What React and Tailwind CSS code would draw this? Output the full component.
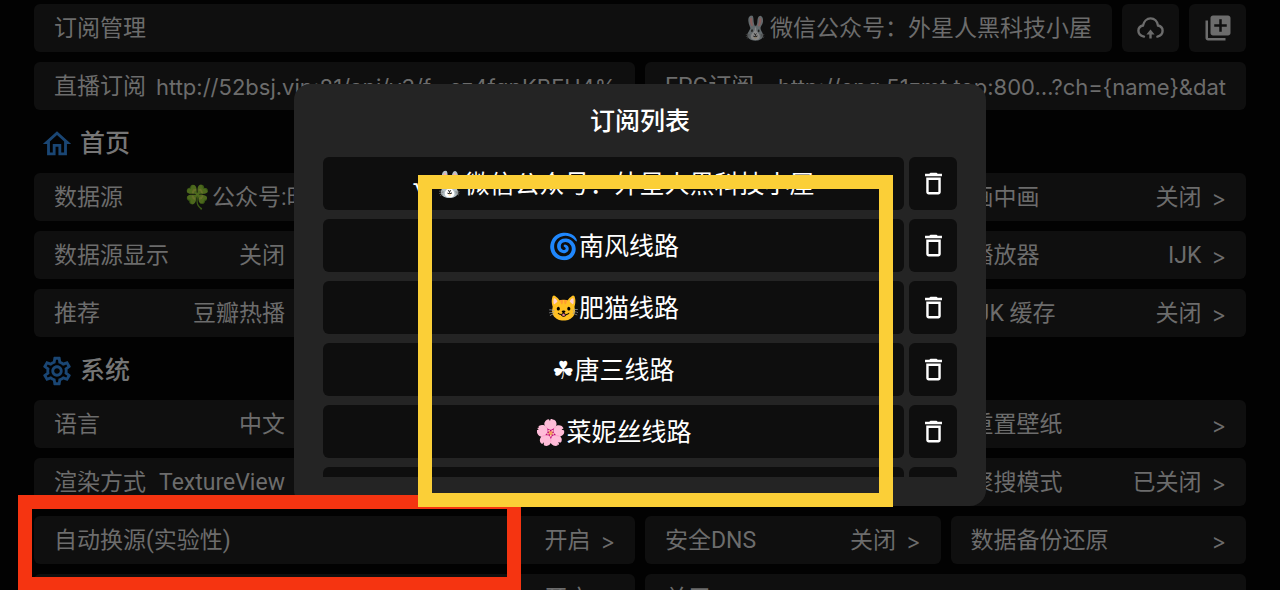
import { MdLibraryAdd, MdDeleteOutline, MdOutlineHome, MdOutlineSettings } from 'react-icons/md';

const homeSettings = [
  { label: '数据源', emoji: '🍀', value: '公众号:时', plain: true },
  {},
  {},
  { label: '画中画', value: '关闭' },
  { label: '数据源显示', value: '关闭' },
  {},
  {},
  { label: '播放器', value: 'IJK' },
  { label: '推荐', value: '豆瓣热播' },
  {},
  {},
  { label: 'IJK 缓存', value: '关闭' },
];

const systemSettings = [
  { label: '语言', value: '中文' },
  {},
  {},
  { label: '重置壁纸' },
  { label: '渲染方式', value: 'TextureView' },
  {},
  {},
  { label: '聚搜模式', value: '已关闭' },
  { label: '自动换源(实验性)', value: '开启', wide: true },
  { label: '安全DNS', value: '关闭' },
  { label: '数据备份还原' },
  { value: '开启', wide: true },
  { label: '关于', wide: true },
];

const subscriptions = [
  '√ 🐰微信公众号：外星人黑科技小屋',
  '🌀南风线路',
  '😺肥猫线路',
  '☘唐三线路',
  '🌸菜妮丝线路',
  '',
];

function CloudUploadIcon() {
  return (
    <svg viewBox="0 0 27 22" className="h-[22px] w-[27px]" fill="none" stroke="currentColor" strokeWidth="2.4" strokeLinecap="round">
      <path d="M7 19.6C3.4 18.8 1.4 16.4 1.4 13.8C1.4 11 3.4 9 6 8.5C6.8 4.6 9.8 1.4 13.6 1.4C17.4 1.4 20.3 4.4 21 8.5C23.6 9 25.6 11 25.6 13.8C25.6 16.4 23.6 18.8 20.4 19.6" />
      <path d="M13.5 21.5V16" strokeLinecap="butt" />
      <path d="M9.4 17.5L13.5 12.6L17.6 17.5Z" fill="currentColor" stroke="none" />
    </svg>
  );
}

function SettingCell({ label, emoji, value, wide, plain }) {
  return (
    <button
      type="button"
      className={`flex h-12 items-center justify-between whitespace-nowrap rounded-md bg-[#0f0f0f] px-5 pt-0.5 ${wide ? 'col-span-2' : ''}`}
    >
      <span>{label}</span>
      {(label || value) && (
        <span className="flex items-center gap-2.5">
          <span>
            {emoji && <span className="opacity-50">{emoji}</span>}
            {value}
          </span>
          {!plain && <span className="font-['Inter'] text-[22px]">&gt;</span>}
        </span>
      )}
    </button>
  );
}

function UrlCell({ label, url }) {
  return (
    <button
      type="button"
      className="flex h-12 items-center justify-between gap-2.5 overflow-hidden whitespace-nowrap rounded-md bg-[#0f0f0f] px-5 pt-0.5"
    >
      <span>{label}</span>
      <span className="font-['Inter'] text-[22px]">{url}</span>
    </button>
  );
}

function Section({ icon: Icon, title, items }) {
  return (
    <section className="flex flex-col gap-2.5">
      <h2 className="flex h-[43px] items-center gap-1.5 pt-1 pl-1.5 text-[25px] font-medium text-[#767676]">
        <Icon className="size-[34px] text-[#1a4674]" />
        {title}
      </h2>
      <div className="grid grid-cols-4 gap-2.5">
        {items.map((item, i) => (
          <SettingCell key={i} {...item} />
        ))}
      </div>
    </section>
  );
}

function SubscriptionDialog() {
  return (
    <div
      role="dialog"
      aria-labelledby="dialog-title"
      className="w-full max-w-[692px] rounded-2xl bg-[#242424] px-[29px] pb-[29px] text-[25px] text-white"
    >
      <h1 id="dialog-title" className="flex h-[73px] items-center justify-center pt-0.5 font-medium">
        订阅列表
      </h1>
      <ul className="flex h-80 flex-col gap-[9px] overflow-hidden">
        {subscriptions.map((name, i) => (
          <li key={i} className="flex shrink-0 gap-[5px]">
            <button type="button" className="h-[53px] flex-1 whitespace-nowrap rounded-md bg-[#0e0e0e] pt-0.5">
              {name}
            </button>
            <button
              type="button"
              aria-label="删除"
              className="flex h-[53px] w-12 items-center justify-center rounded-md bg-[#0e0e0e]"
            >
              <MdDeleteOutline className="size-[29px]" />
            </button>
          </li>
        ))}
      </ul>
    </div>
  );
}

export default function App() {
  return (
    <div className="relative h-screen overflow-hidden bg-[#020202] font-[Roboto,'Noto_Sans_CJK_SC',sans-serif] text-[23px] text-[#6c6c6c]">
      <main className="flex flex-col gap-2.5 px-[34px] pt-1">
        <div className="flex gap-2.5">
          <button type="button" className="flex h-12 flex-1 items-center justify-between rounded-md bg-[#0f0f0f] px-5 pt-0.5">
            <span>订阅管理</span>
            <span>
              <span className="opacity-50">🐰</span>微信公众号：外星人黑科技小屋
            </span>
          </button>
          <button type="button" aria-label="上传" className="flex h-12 w-[57px] items-center justify-center rounded-md bg-[#0f0f0f]">
            <CloudUploadIcon />
          </button>
          <button type="button" aria-label="添加" className="flex h-12 w-[57px] items-center justify-center rounded-md bg-[#0f0f0f]">
            <MdLibraryAdd className="size-[30px]" />
          </button>
        </div>

        <div className="grid grid-cols-2 gap-2.5">
          <UrlCell label="直播订阅" url="http://52bsj.vip:81/api/v3/f…cz4fqpKBFU4%" />
          <UrlCell label="EPG订阅" url="http://epg.51zmt.top:800…?ch={name}&dat" />
        </div>

        <Section icon={MdOutlineHome} title="首页" items={homeSettings} />
        <Section icon={MdOutlineSettings} title="系统" items={systemSettings} />
      </main>

      <div className="absolute inset-0 flex items-center justify-center">
        <SubscriptionDialog />
      </div>

      {/* Highlight frames */}
      <div className="pointer-events-none absolute top-[495px] left-[18px] h-24 w-[503px] border-14 border-[#f53411]" />
      <div className="pointer-events-none absolute top-[175px] left-[418px] h-[332px] w-[475px] border-14 border-[#fbcf37]" />
    </div>
  );
}
